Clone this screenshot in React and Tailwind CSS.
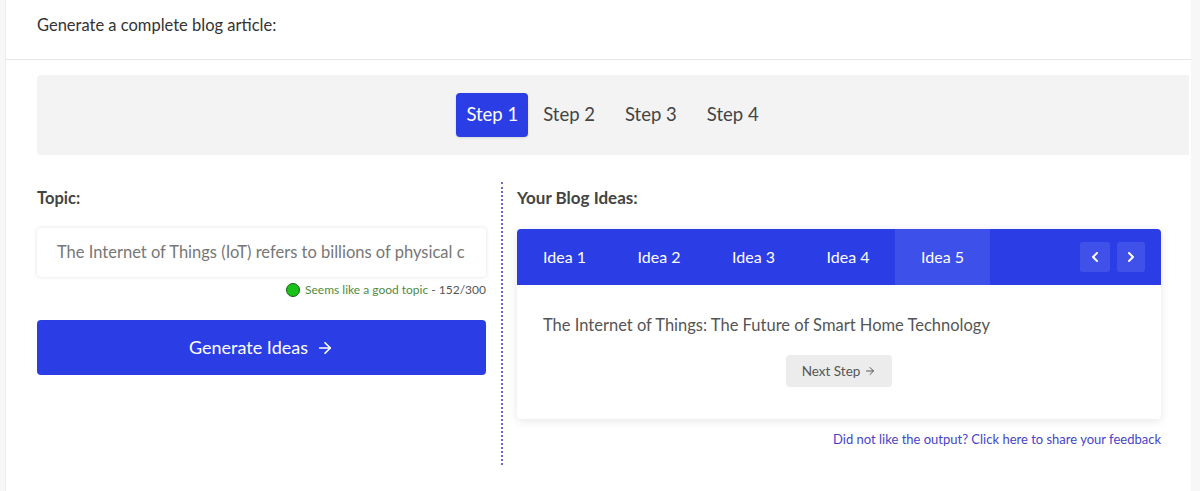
import { ArrowRight, ChevronLeft, ChevronRight } from 'lucide-react'

const ideas = ['Idea 1', 'Idea 2', 'Idea 3', 'Idea 4', 'Idea 5']
const steps = ['Step 1', 'Step 2', 'Step 3', 'Step 4']

function App() {
  return (
    <div className="min-h-[491px] bg-[#f7f7f7] pl-[5px] pr-[9px] font-['Lato',sans-serif] text-[#333]">
      <div className="min-h-[491px] bg-white border-l border-[#ececec]">
        <div className="h-[60px] border-b border-[#e6e6e6] pl-[31px] pt-[13px] text-[16.5px] text-[#333]">
          Generate a complete blog article:
        </div>

        <div className="ml-[31px] mr-[2px] mt-[15px] h-[80px] rounded-l-[4px] bg-[#f3f3f3] flex items-center justify-center">
          <div className="flex items-center pl-[4px]">
            {steps.map((s, i) => (
              <div
                key={s}
                className={
                  i === 0
                    ? 'h-[44px] px-[10px] flex items-center rounded-[4px] bg-[#2b3ee6] text-white text-[18.5px] shadow-sm'
                    : 'h-[44px] px-[15px] flex items-center text-[18.5px] text-[#444]'
                }
              >
                {s}
              </div>
            ))}
          </div>
        </div>

        <div className="flex pl-[31px] pt-[32px]">
          <div className="w-[449px]">
            <div className="text-[16.5px] font-bold text-[#444] h-[22px] leading-[22px]">Topic:</div>
            <div className="mt-[19px] h-[49px] rounded-[4px] bg-white shadow-[0_0_4px_rgba(0,0,0,0.12)] flex items-center pl-[20px] text-[16.5px] text-[#777] overflow-hidden whitespace-nowrap">
              The Internet of Things (IoT) refers to billions of physical c
            </div>
            <div className="mt-[4px] flex items-center justify-end gap-[5px] text-[12px]">
              <span className="w-[14px] h-[14px] rounded-full bg-[#19c119] border border-[#1a5e1a]" />
              <span className="text-[#4f8a44]">
                Seems like a good topic <span className="text-[#555]">- 152/300</span>
              </span>
            </div>
            <div className="mt-[21px] h-[55px] rounded-[4px] bg-[#2b3ee6] flex items-center justify-center gap-[8px] text-white text-[18px]">
              Generate Ideas
              <ArrowRight size={18} strokeWidth={2.25} />
            </div>
          </div>

          <div className="ml-[15px] mt-[-5px] h-[283px] border-l-2 border-dotted border-[#6a6ac0]" />

          <div className="ml-[14px] w-[644px]">
            <div className="text-[17px] font-bold text-[#444] h-[22px] leading-[22px]">Your Blog Ideas:</div>
            <div className="mt-[20px] rounded-[4px] bg-white shadow-[0_2px_10px_rgba(0,0,0,0.1)]">
              <div className="h-[56px] rounded-t-[4px] bg-[#2b3ee6] flex items-center">
                {ideas.map((idea, i) => (
                  <div
                    key={idea}
                    className={
                      i === 4
                        ? 'w-[95px] h-full flex items-center pl-[26px] text-white text-[16px] bg-[#3d50ea]'
                        : 'w-[94.5px] h-full flex items-center pl-[26px] text-white text-[16px]'
                    }
                  >
                    {idea}
                  </div>
                ))}
                <div className="ml-auto mr-[16px] flex gap-[7px]">
                  <div className="w-[30px] h-[30px] rounded-[3px] bg-white/10 flex items-center justify-center text-white">
                    <ChevronLeft size={16} strokeWidth={3} />
                  </div>
                  <div className="w-[28px] h-[30px] rounded-[3px] bg-white/10 flex items-center justify-center text-white">
                    <ChevronRight size={16} strokeWidth={3} />
                  </div>
                </div>
              </div>
              <div className="h-[134px] px-[26px] pt-[28px]">
                <div className="text-[16.5px] text-[#555]">The Internet of Things: The Future of Smart Home Technology</div>
                <div className="mt-[17px] flex justify-center">
                  <div className="h-[32px] px-[16px] rounded-[4px] bg-[#ececec] flex items-center gap-[4px] text-[13.5px] text-[#555]">
                    Next Step
                    <ArrowRight size={12} strokeWidth={2} />
                  </div>
                </div>
              </div>
            </div>
            <div className="mt-[11px] text-right text-[13px] text-[#4545c4]">
              Did not like the output? Click here to share your feedback
            </div>
          </div>
        </div>
      </div>
    </div>
  )
}

export default App
